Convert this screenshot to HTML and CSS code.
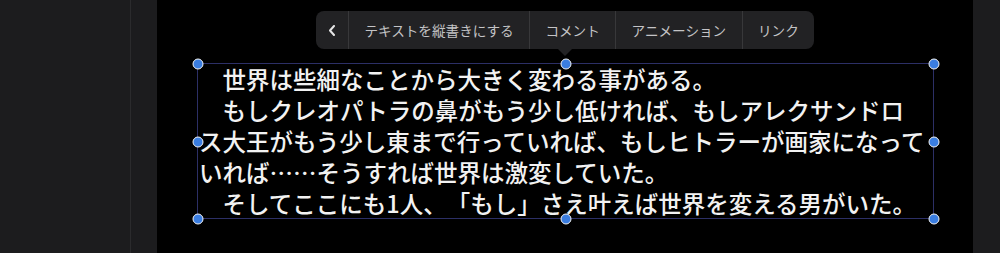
FILE: index.html
```html
<!DOCTYPE html>
<html lang="ja">
<head>
<meta charset="utf-8">
<title>Editor</title>
<link rel="stylesheet" href="styles.css">
</head>
<body>
<div class="app">
  <aside class="sidebar"></aside>
  <div class="gutter"></div>
  <main class="canvas">
    <div class="toolbar">
      <button class="tb-item tb-back" aria-label="戻る">
        <svg width="8" height="11" viewBox="0 0 8 11"><polyline points="6,1 2,5.5 6,10" fill="none" stroke="#e6e6e6" stroke-width="2" stroke-linecap="round" stroke-linejoin="round"/></svg>
      </button>
      <button class="tb-item">テキストを縦書きにする</button>
      <button class="tb-item">コメント</button>
      <button class="tb-item">アニメーション</button>
      <button class="tb-item">リンク</button>
      <span class="tb-pointer"></span>
    </div>
    <div class="textbox">
      <p class="text">　世界は些細なことから大きく変わる事がある。<br>　もしクレオパトラの鼻がもう少し低ければ、もしアレクサンドロ<br>ス大王がもう少し東まで行っていれば、もしヒトラーが画家になって<br>いれば……そうすれば世界は激変していた。<br>　そしてここにも1人、「もし」さえ叶えば世界を変える男がいた。</p>
      <span class="handle h-tl"></span>
      <span class="handle h-tm"></span>
      <span class="handle h-tr"></span>
      <span class="handle h-ml"></span>
      <span class="handle h-mr"></span>
      <span class="handle h-bl"></span>
      <span class="handle h-bm"></span>
      <span class="handle h-br"></span>
    </div>
  </main>
  <aside class="rightbar"></aside>
</div>
</body>
</html>
```
FILE: styles.css
```css
html, body {
  margin: 0;
  padding: 0;
  background: #000;
}
body {
  font-family: "Noto Sans CJK JP", "Noto Sans", sans-serif;
}
.app {
  display: flex;
  width: 1000px;
  height: 253px;
  overflow: hidden;
}
.sidebar {
  width: 130px;
  background: #1c1c1e;
  border-right: 1px solid #2b2b2d;
}
.gutter {
  width: 26px;
  background: #1c1c1e;
}
.canvas {
  position: relative;
  width: 816px;
  background: #000;
  padding: 63px 0 0 40px;
  box-sizing: border-box;
}
.rightbar {
  flex: 1;
  background: #1c1c1e;
}
.toolbar {
  position: absolute;
  left: 159px;
  top: 11px;
  height: 38px;
  display: flex;
  background: #222224;
  border-radius: 8px;
}
.tb-item {
  display: flex;
  align-items: center;
  justify-content: center;
  height: 38px;
  padding: 0 15.4px;
  margin: 0;
  border: 0;
  border-left: 1px solid #38383a;
  background: transparent;
  color: #c4c4c6;
  font-family: "Noto Sans CJK JP", sans-serif;
  font-size: 13.6px;
  letter-spacing: 0;
  white-space: nowrap;
}
.tb-back {
  width: 32px;
  padding: 0;
  border-left: 0;
}
.tb-pointer {
  position: absolute;
  left: 242px;
  top: 38px;
  width: 0;
  height: 0;
  border-left: 7px solid transparent;
  border-right: 7px solid transparent;
  border-top: 7px solid #222224;
}
.textbox {
  position: relative;
  width: 737px;
  height: 156px;
  box-sizing: border-box;
  border: 1px solid #2c2f66;
  padding-left: 1px;
}
.text {
  margin: 0;
  color: #f2f2f2;
  font-size: 23.5px;
  line-height: 31px;
  font-weight: 500;
  white-space: nowrap;
  text-spacing-trim: space-all;
}
.handle {
  position: absolute;
  width: 9px;
  height: 9px;
  border-radius: 50%;
  background: #3a7de0;
  border: 1.5px solid #f4f4f4;
  box-sizing: content-box;
  transform: translate(-50%, -50%);
}
.h-tl { left: -0.5px; top: -0.5px; }
.h-tm { left: 368px; top: -0.5px; }
.h-tr { left: 735.5px; top: -0.5px; }
.h-ml { left: -0.5px; top: 77.5px; }
.h-mr { left: 735.5px; top: 77.5px; }
.h-bl { left: -0.5px; top: 154.5px; }
.h-bm { left: 368px; top: 154.5px; }
.h-br { left: 735.5px; top: 154.5px; }
```
